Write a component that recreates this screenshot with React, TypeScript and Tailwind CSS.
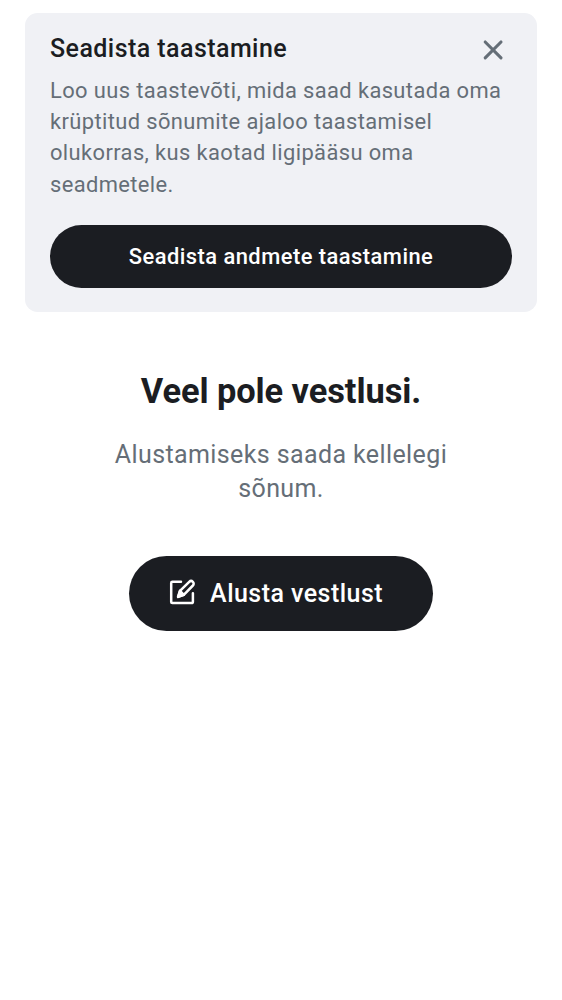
export default function App() {
  return (
    <main className="min-h-[1000px] w-[562px] bg-white font-['Roboto',sans-serif] text-[#1b1d22]">
      <div className="px-[25px] pt-[12.5px]">
        <section className="h-[299.8px] rounded-[12.5px] bg-[#f0f1f5] px-[25px] pt-[19px]">
          <div className="flex h-[34px] items-center justify-between">
            <h2 className="text-[25px] font-medium leading-[34px] tracking-[0.44px]">Seadista taastamine</h2>
            <button aria-label="Sulge" className="mr-2 mt-[3px]">
              <svg width="22" height="22" viewBox="0 0 22 22" fill="none" stroke="#656e77" strokeWidth="3.1" strokeLinecap="round"><path d="M3.2 3l15.8 15.8M19 3L3.2 18.8" /></svg>
            </button>
          </div>
          <p className="mt-[9.1px] whitespace-nowrap text-[21.9px] leading-[31.4px] tracking-[0.39px] text-[#656e77]">
            Loo uus taastevõti, mida saad kasutada oma<br />krüptitud sõnumite ajaloo taastamisel<br />olukorras, kus kaotad ligipääsu oma<br />seadmetele.
          </p>
          <button className="mt-[24.8px] h-[62.5px] w-full rounded-full bg-[#1b1d22] pt-[2px] text-[21.9px] font-medium tracking-[0.47px] text-white">Seadista andmete taastamine</button>
        </section>
      </div>
      <section className="flex flex-col items-center pt-[56.7px] text-center">
        <h1 className="text-[34.4px] font-bold leading-[44px] tracking-[-0.06px]">Veel pole vestlusi.</h1>
        <p className="mt-[25px] text-[25px] leading-[34.2px] tracking-[0.39px] text-[#656e77]">Alustamiseks saada kellelegi<br />sõnum.</p>
        <button className="mt-[49.6px] flex h-[75px] w-[304.6px] items-center rounded-full bg-[#1b1d22] pl-[39px] text-[25px] font-medium tracking-[0.46px] text-white">
          <svg className="mr-[12.4px]" width="30" height="30" viewBox="0 0 30 30" fill="none" stroke="currentColor" strokeWidth="2.5" strokeLinejoin="round" strokeLinecap="round"><path d="M13 3.7H4.4a1.2 1.2 0 0 0-1.2 1.2v19a1.2 1.2 0 0 0 1.2 1.2h19.3a1.2 1.2 0 0 0 1.2-1.2V15.3" /><path d="M10.1 18.9l1.9-6 9.2-9.1a2.6 2.6 0 0 1 3.7 3.7l-9.1 9.4z" /><path d="M10.1 18.9l1.9-6 3.8 4z" fill="currentColor" /></svg>
          Alusta vestlust
        </button>
      </section>
    </main>
  );
}
